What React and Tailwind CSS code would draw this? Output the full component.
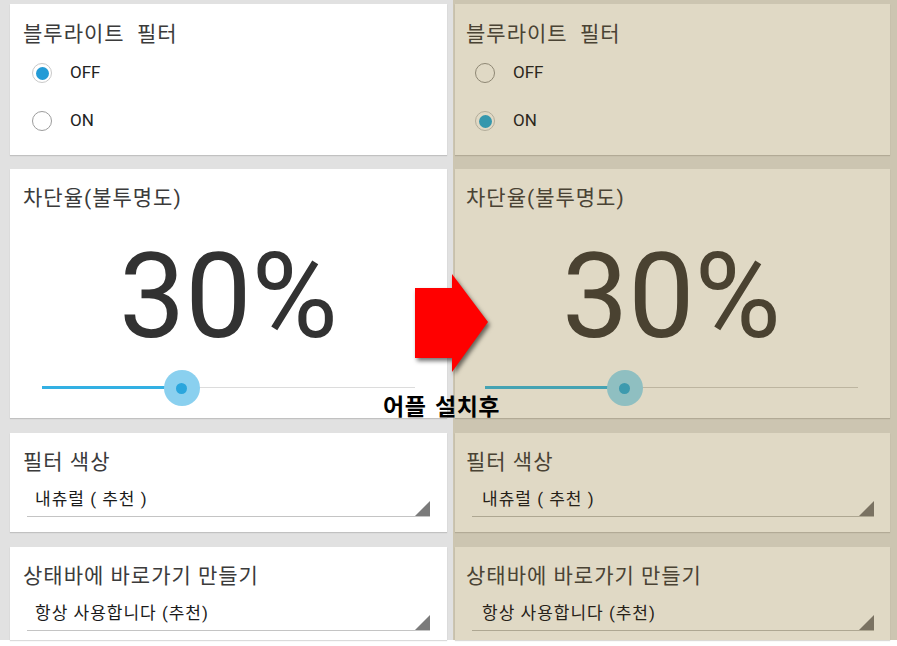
import React from 'react';

const KR = { fontFamily: 'Roboto, "Noto Sans CJK KR", sans-serif' };

const themes = {
  light: {
    col: 'w-[453px] bg-[#e1e1e1] pl-[10px] pr-[6px]',
    card: 'bg-white shadow-[0_1px_1px_rgba(0,0,0,0.14)]',
    pad: 'pl-[13px]',
    title: 'text-[#3b3b3b]',
    label: 'text-[#222222]',
    big: 'text-[#323232]',
    ringOff: 'border-[#9c9c9c] bg-white',
    ringOn: 'border-[#c9c9c9] bg-white',
    dot: 'bg-[#239bd6]',
    track: 'bg-[#dcdcdc]',
    active: 'bg-[#33b0e3]',
    halo: 'bg-[#8ad0ef]',
    knob: 'bg-[#2aa6dd]',
    line: 'border-[#c4c4c4]',
    tri: '#7b7b7b',
    value: 'text-[#1a1a1a]',
    drop: 'ml-[17px] mr-[17px] pl-[8px]',
  },
  warm: {
    col: 'flex-1 bg-[#ccc5b1] pl-[2px] pr-[7px]',
    card: 'bg-[#e0d9c5] shadow-[0_1px_1px_rgba(60,50,30,0.18)]',
    pad: 'pl-[11px]',
    title: 'text-[#4a4334]',
    label: 'text-[#2c271d]',
    big: 'text-[#4a4231]',
    ringOff: 'border-[#8e8774] bg-[#e0d9c5]',
    ringOn: 'border-[#b3ad9b] bg-[#e0d9c5]',
    dot: 'bg-[#3597ad]',
    track: 'bg-[#bdb5a0]',
    active: 'bg-[#45a3b3]',
    halo: 'bg-[#8fbfc1]',
    knob: 'bg-[#3d9aae]',
    line: 'border-[#aea792]',
    tri: '#7a7262',
    value: 'text-[#262118]',
    drop: 'ml-[17px] mr-[16px] pl-[10px]',
  },
};

const Radio = ({ t, checked, label }) => (
  <div className="flex h-[48px] items-center">
    <div
      className={`ml-[9px] flex h-[20px] w-[20px] items-center justify-center rounded-full border-[1.5px] ${
        checked ? t.ringOn : t.ringOff
      }`}
    >
      {checked && <div className={`h-[13px] w-[13px] rounded-full ${t.dot}`} />}
    </div>
    <span className={`ml-[18px] text-[17px] ${t.label}`} style={{ fontFamily: 'Roboto, sans-serif' }}>
      {label}
    </span>
  </div>
);

const Title = ({ t, children }) => (
  <div className={`text-[21px] leading-[27px] tracking-[1px] ${t.title}`}>{children}</div>
);

const Dropdown = ({ t, value }) => (
  <div className={`relative mt-[11px] h-[30px] border-b-[1.5px] ${t.line} ${t.drop}`}>
    <span className={`text-[17px] leading-[24px] tracking-[1px] ${t.value}`}>{value}</span>
    <svg className="absolute bottom-0 right-0" width="15" height="15" viewBox="0 0 15 15">
      <polygon points="15,0 15,15 0,15" fill={t.tri} />
    </svg>
  </div>
);

const Slider = ({ t, pos }) => (
  <div className="relative mx-[32px] mt-[14px] h-[36px]">
    <div className={`absolute left-0 right-0 top-[17px] h-px ${t.track}`} />
    <div className={`absolute left-0 top-[16px] h-[3px] ${t.active}`} style={{ width: `${pos}%` }} />
    <div
      className={`absolute top-0 flex h-[36px] w-[36px] -translate-x-1/2 items-center justify-center rounded-full ${t.halo}`}
      style={{ left: `${pos}%` }}
    >
      <div className={`h-[11px] w-[11px] rounded-full ${t.knob}`} />
    </div>
  </div>
);

const Column = ({ t, on }) => (
  <div className={`flex flex-col pt-[4px] ${t.col}`} style={KR}>
    <div className={`h-[151px] pt-[17px] ${t.card} ${t.pad}`}>
      <Title t={t}>블루라이트&nbsp; 필터</Title>
      <div className="mt-[1px]">
        <Radio t={t} checked={!on} label="OFF" />
        <Radio t={t} checked={on} label="ON" />
      </div>
    </div>
    <div className={`mt-[14px] h-[249px] pt-[16px] ${t.card} ${t.pad}`}>
      <Title t={t}>차단율(불투명도)</Title>
      <div
        className={`mt-[26px] -ml-[13px] text-center text-[118px] leading-none ${t.big}`}
        style={{ fontFamily: 'Roboto, sans-serif' }}
      >
        30%
      </div>
      <div className="-ml-[13px]">
        <Slider t={t} pos={37.4} />
      </div>
    </div>
    <div className={`mt-[15px] h-[99px] pt-[16px] ${t.card}`}>
      <div className={t.pad}>
        <Title t={t}>필터 색상</Title>
      </div>
      <Dropdown t={t} value="내츄럴 ( 추천 )" />
    </div>
    <div className={`mt-[15px] flex-1 pt-[16px] ${t.card}`}>
      <div className={t.pad}>
        <Title t={t}>상태바에 바로가기 만들기</Title>
      </div>
      <Dropdown t={t} value="항상 사용합니다 (추천)" />
    </div>
  </div>
);

export default function App() {
  return (
    <div className="relative h-[646px] w-[897px] overflow-hidden bg-white">
      <div className="flex h-[640px]">
        <Column t={themes.light} on={false} />
        <Column t={themes.warm} on={true} />
      </div>

      {/* red arrow between the two screens */}
      <svg
        className="absolute left-[412px] top-[270px] drop-shadow-[2px_3px_2px_rgba(0,0,0,0.55)]"
        width="84"
        height="108"
        viewBox="0 0 84 108"
      >
        <polygon points="3,18 40,18 40,4 76,52 40,102 40,88 3,88" fill="#ff0000" />
      </svg>

      <div
        className="absolute left-[383px] top-[390px] text-[23px] font-bold leading-[30px] tracking-[0.5px] text-black"
        style={{ fontFamily: '"Noto Sans CJK KR", sans-serif', wordSpacing: '3px' }}
      >
        어플 설치후
      </div>
    </div>
  );
}
